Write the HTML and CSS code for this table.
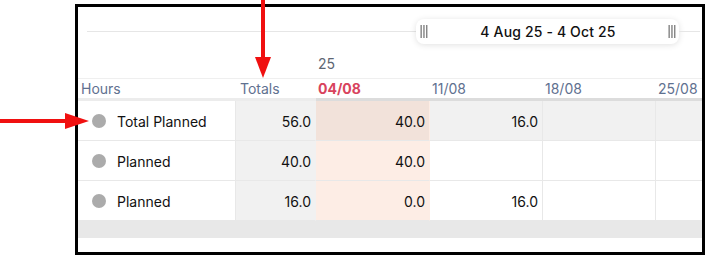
FILE: index.html
```html
<!DOCTYPE html>
<html lang="en">
<head>
  <meta charset="UTF-8" />
  <meta name="viewport" content="width=device-width, initial-scale=1.0" />
  <title>Hours Planner</title>
  <link rel="stylesheet" href="styles.css">
</head>
<body>
  <div class="sheet">
    <div class="range-bar">
      <div class="rule"></div>
      <div class="range-pill">
        <svg class="grip" width="8" height="13" viewBox="0 0 8 13">
          <rect x="0.5" y="0" width="1.3" height="13" fill="#7a7a7a" />
          <rect x="3.3" y="0" width="1.3" height="13" fill="#7a7a7a" />
          <rect x="6.1" y="0" width="1.3" height="13" fill="#7a7a7a" />
        </svg>
        <span class="range-text">4 Aug 25 - 4 Oct 25</span>
        <svg class="grip" width="8" height="13" viewBox="0 0 8 13">
          <rect x="0.5" y="0" width="1.3" height="13" fill="#7a7a7a" />
          <rect x="3.3" y="0" width="1.3" height="13" fill="#7a7a7a" />
          <rect x="6.1" y="0" width="1.3" height="13" fill="#7a7a7a" />
        </svg>
      </div>
      <div class="rule tail"></div>
    </div>

    <div class="row year-row">
      <div></div>
      <div></div>
      <div class="year">25</div>
    </div>

    <div class="row head-row">
      <div class="hcell first">Hours</div>
      <div class="hcell totals">Totals</div>
      <div class="hcell date today">04/08</div>
      <div class="hcell date">11/08</div>
      <div class="hcell date">18/08</div>
      <div class="hcell date">25/08</div>
    </div>

    <div class="row data-row total">
      <div class="name"><span class="dot"></span>Total Planned</div>
      <div class="num sum">56.0</div>
      <div class="num today">40.0</div>
      <div class="num">16.0</div>
      <div class="num"></div>
      <div class="num"></div>
    </div>

    <div class="row data-row">
      <div class="name"><span class="dot"></span>Planned</div>
      <div class="num sum">40.0</div>
      <div class="num today">40.0</div>
      <div class="num"></div>
      <div class="num"></div>
      <div class="num"></div>
    </div>

    <div class="row data-row">
      <div class="name"><span class="dot"></span>Planned</div>
      <div class="num sum">16.0</div>
      <div class="num today">0.0</div>
      <div class="num">16.0</div>
      <div class="num"></div>
      <div class="num"></div>
    </div>

    <div class="scroll-track"></div>
  </div>

  <!-- callout arrows -->
  <svg class="arrow arrow-down" width="18" height="79" viewBox="0 0 18 79">
    <rect x="7" y="0" width="4" height="60" fill="#f01010" />
    <polygon points="1,57 17,57 9,78" fill="#f01010" />
  </svg>
  <svg class="arrow arrow-right" width="90" height="18" viewBox="0 0 90 18">
    <rect x="0" y="7" width="68" height="4" fill="#f01010" />
    <polygon points="65,1 65,17 89,9" fill="#f01010" />
  </svg>
</body>
</html>
```

FILE: styles.css
```css
body {
  margin: 0;
  background: #fff;
  font-family: 'Inter', 'Liberation Sans', sans-serif;
  font-size: 14px;
  color: #111;
}

.sheet {
  margin: 4px 0 0 75px;
  width: 630px;
  height: 251px;
  border: 3px solid #000;
  box-sizing: border-box;
  overflow: hidden;
  background: #fff;
}

/* date range picker */
.range-bar {
  display: flex;
  align-items: center;
  height: 49px;
  padding: 0 2px 0 9px;
}

.rule {
  flex: 1;
  height: 1px;
  background: #e6e6e6;
}

.rule.tail {
  flex: 0 0 21px;
}

.range-pill {
  flex: 0 0 263px;
  height: 25px;
  display: flex;
  align-items: center;
  justify-content: space-between;
  padding: 0 3px 0 4px;
  box-sizing: border-box;
  background: #fff;
  border-radius: 8px;
  box-shadow: 0 1px 6px rgba(0, 0, 0, 0.12);
}

.range-text {
  font-weight: 500;
  color: #111;
  letter-spacing: 0.15px;
}

.grip {
  display: block;
}

/* grid */
.row {
  display: grid;
  grid-template-columns: 158px 80px 114px 113px 113px 113px;
}

.year-row {
  height: 22px;
}

.year {
  color: #5d6673;
  padding-left: 2px;
  line-height: 16px;
}

.head-row {
  border-top: 1px solid #efefef;
}

.hcell {
  height: 19px;
  line-height: 19px;
  padding-left: 2px;
  color: #5f7190;
  border-bottom: 3px solid #ececec;
}

.hcell.first {
  padding-left: 3px;
}

.hcell.totals {
  padding-left: 4px;
}

.hcell.date {
  border-bottom-color: #dcdcdc;
}

.hcell.today {
  color: #d8435d;
  font-weight: 700;
}

.data-row > div {
  height: 38px;
  padding-top: 1px;
  border-bottom: 1px solid #e8e8e8;
  border-right: 1px solid #e8e8e8;
  box-sizing: content-box;
}

.name {
  display: flex;
  align-items: center;
  gap: 11px;
  padding-left: 14px;
}

.dot {
  width: 14px;
  height: 14px;
  border-radius: 50%;
  background: #ababab;
}

.num {
  display: flex;
  align-items: center;
  justify-content: flex-end;
  padding-right: 4px;
}

.data-row .sum {
  background: #f1f1f1;
  border-right-color: #f1f1f1;
}

.data-row .today {
  background: #fdede5;
  border-right-color: #fdede5;
}

.data-row.total .num {
  background: #f1f1f1;
}

.data-row.total .today {
  background: #f2e2da;
}

.scroll-track {
  height: 17px;
  background: #e8e8e8;
}

.arrow {
  position: absolute;
}

.arrow-down {
  left: 254px;
  top: 0;
}

.arrow-right {
  left: 0;
  top: 112px;
}
```
